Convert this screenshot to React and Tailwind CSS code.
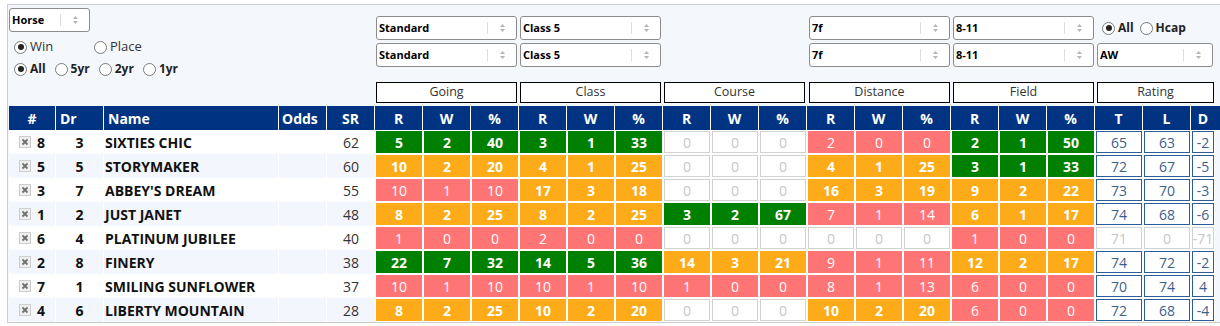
import React from 'react';

const G = 'g', O = 'o', S = 's', W = 'w';

const horses = [
  { no: 8, dr: 3, name: 'SIXTIES CHIC', sr: 62, stats: [[5, 2, 40, G], [3, 1, 33, G], [0, 0, 0, W], [2, 0, 0, S], [2, 1, 50, G]], rating: [65, 63, -2] },
  { no: 5, dr: 5, name: 'STORYMAKER', sr: 60, stats: [[10, 2, 20, O], [4, 1, 25, O], [0, 0, 0, W], [4, 1, 25, O], [3, 1, 33, G]], rating: [72, 67, -5] },
  { no: 3, dr: 7, name: "ABBEY'S DREAM", sr: 55, stats: [[10, 1, 10, S], [17, 3, 18, O], [0, 0, 0, W], [16, 3, 19, O], [9, 2, 22, O]], rating: [73, 70, -3] },
  { no: 1, dr: 2, name: 'JUST JANET', sr: 48, stats: [[8, 2, 25, O], [8, 2, 25, O], [3, 2, 67, G], [7, 1, 14, S], [6, 1, 17, O]], rating: [74, 68, -6] },
  { no: 6, dr: 4, name: 'PLATINUM JUBILEE', sr: 40, stats: [[1, 0, 0, S], [2, 0, 0, S], [0, 0, 0, W], [0, 0, 0, W], [1, 0, 0, S]], rating: [71, 0, -71], dim: true },
  { no: 2, dr: 8, name: 'FINERY', sr: 38, stats: [[22, 7, 32, G], [14, 5, 36, G], [14, 3, 21, O], [9, 1, 11, S], [12, 2, 17, O]], rating: [74, 72, -2] },
  { no: 7, dr: 1, name: 'SMILING SUNFLOWER', sr: 37, stats: [[10, 1, 10, S], [10, 1, 10, S], [1, 0, 0, S], [8, 1, 13, S], [6, 0, 0, S]], rating: [70, 74, 4] },
  { no: 4, dr: 6, name: 'LIBERTY MOUNTAIN', sr: 28, stats: [[8, 2, 25, O], [10, 2, 20, O], [0, 0, 0, W], [10, 2, 20, O], [6, 0, 0, S]], rating: [72, 68, -4] },
];

const cellStyles = {
  g: 'bg-[#008000] text-white font-bold',
  o: 'bg-[#fdab19] text-white font-bold',
  s: 'bg-[#ff7474] text-white',
  w: 'bg-white border border-[#d2d2d2] text-[#c6c6c6]',
};

const cols = 'grid grid-cols-[47px_48px_175px_48px_48px_repeat(15,48px)_48px_48px_24px]';
const groups = ['Going', 'Class', 'Course', 'Distance', 'Field'];

function Arrows() {
  return (
    <svg width="7" height="10" viewBox="0 0 7 10">
      <path d="M3.5 1 L6 4 L1 4 Z" fill="#b5b5b5" />
      <path d="M3.5 9 L6 6 L1 6 Z" fill="#b5b5b5" />
    </svg>
  );
}

function Select({ value, className = '' }) {
  return (
    <div className={`h-6 bg-white border border-[#8c8c8c] rounded-[3px] flex items-center text-[11px] font-bold text-black ${className}`}>
      <span className="flex-1 pl-[2px] truncate">{value}</span>
      <span className="w-px h-[12px] bg-[#dcdcdc]" />
      <span className="w-[28px] flex justify-center">
        <Arrows />
      </span>
    </div>
  );
}

function Radio({ checked, label, bold }) {
  return (
    <span className="flex items-center gap-[3px]">
      <span className="w-[13px] h-[13px] rounded-full border border-[#7a7a7a] bg-white flex items-center justify-center">
        {checked && <span className="w-[6px] h-[6px] rounded-full bg-[#222]" />}
      </span>
      <span className={bold ? 'text-[12px] font-bold text-[#222]' : 'text-[13px] text-[#333]'}>{label}</span>
    </span>
  );
}

function RemoveBox() {
  return (
    <svg width="12" height="12" viewBox="0 0 12 12">
      <rect x="0.5" y="0.5" width="11" height="11" fill="#efefef" stroke="#cdcdcd" />
      <path d="M3.5 3.5 L8.5 8.5 M8.5 3.5 L3.5 8.5" stroke="#6f6f6f" strokeWidth="1.8" />
    </svg>
  );
}

function StatCell({ value, kind }) {
  return (
    <div className="p-px bg-white h-6">
      <div className={`h-full flex items-center justify-center ${cellStyles[kind]}`}>{value}</div>
    </div>
  );
}

function RatingCell({ value, dim }) {
  return (
    <div className="p-px bg-white h-6 overflow-hidden">
      <div className={`h-full flex items-center justify-center bg-white border ${dim ? 'border-[#d2d2d2] text-[#c6c6c6]' : 'border-[#2a5d9a] text-[#3c5f8c]'}`}>
        {value}
      </div>
    </div>
  );
}

export default function App() {
  return (
    <div className="w-[1220px] h-[326px] bg-white overflow-hidden font-['Open_Sans',sans-serif]">
      <div className="ml-[7px] mt-[4px] w-[1230px] h-[319px] border-l border-t border-b border-[#cccccc] bg-[#f4f7fc] pl-px">
        {/* filters */}
        <div className="flex h-[100px]">
          <div className="w-[366px] pt-[3px]">
            <Select value="Horse" className="w-[81px]" />
            <div className="flex mt-[7px] ml-[5px] h-4 items-center">
              <span className="w-[80px]">
                <Radio checked label="Win" />
              </span>
              <Radio label="Place" />
            </div>
            <div className="flex mt-[6px] ml-[5px] h-4 items-center gap-[9px]">
              <Radio checked label="All" bold />
              <Radio label="5yr" bold />
              <Radio label="2yr" bold />
              <Radio label="1yr" bold />
            </div>
          </div>
          <div className="pt-[11px]">
            <div className="grid grid-cols-[repeat(15,48px)_48px_48px_24px] gap-y-[3px]">
              <Select value="Standard" className="col-span-3 ml-px mr-[2px]" />
              <Select value="Class 5" className="col-span-3 ml-px mr-[2px]" />
              <div className="col-span-3" />
              <Select value="7f" className="col-span-3 ml-[2px] mr-px" />
              <Select value="8-11" className="col-span-3 ml-[2px] mr-px" />
              <div className="col-span-3 flex items-center pl-[7px] gap-[6px]">
                <Radio checked label="All" bold />
                <Radio label="Hcap" bold />
              </div>
              <Select value="Standard" className="col-span-3 ml-px mr-[2px]" />
              <Select value="Class 5" className="col-span-3 ml-px mr-[2px]" />
              <div className="col-span-3" />
              <Select value="7f" className="col-span-3 ml-[2px] mr-px" />
              <Select value="8-11" className="col-span-3 ml-[2px] mr-px" />
              <Select value="AW" className="col-span-3 ml-[2px] mr-[2px]" />
            </div>
            <div className="grid grid-cols-[repeat(15,48px)_48px_48px_24px] mt-[15px]">
              {[...groups, 'Rating'].map((g, i) => (
                <div
                  key={g}
                  className={`col-span-3 h-[21px] bg-white border border-black flex items-center justify-center text-[12.5px] text-[#333] ${i >= 3 ? 'ml-[2px] mr-px' : 'ml-px mr-[2px]'}`}
                >
                  {g}
                </div>
              ))}
            </div>
          </div>
        </div>

        {/* header */}
        <div className={`${cols} h-6 mt-px bg-[#003482] text-white font-bold text-[14px]`}>
          <div className="border-r border-white flex items-center justify-center">#</div>
          <div className="border-r border-white flex items-center pl-[4px]">Dr</div>
          <div className="border-r border-white flex items-center pl-[4px]">Name</div>
          <div className="border-r border-white flex items-center pl-[3px]">Odds</div>
          <div className="border-r border-white flex items-center justify-center">SR</div>
          {groups.map(g =>
            ['R', 'W', '%'].map(h => (
              <div key={g + h} className="border-r border-white flex items-center justify-center">{h}</div>
            ))
          )}
          <div className="border-r border-white flex items-center justify-center">T</div>
          <div className="border-r border-white flex items-center justify-center">L</div>
          <div className="flex items-center justify-center">D</div>
        </div>

        {/* rows */}
        {horses.map((h, idx) => {
          const bg = idx % 2 === 0 ? 'bg-white' : 'bg-[#f3f6fc]';
          return (
            <div key={h.name} className={`${cols} h-6 text-[14px]`}>
              <div className={`${bg} border-r border-white flex items-center pl-[10px] gap-[6px] font-bold text-[#111]`}>
                <RemoveBox />
                <span>{h.no}</span>
              </div>
              <div className={`${bg} border-r border-white flex items-center justify-center font-bold text-[#111]`}>{h.dr}</div>
              <div className={`${bg} border-r border-white flex items-center pl-px font-bold text-[#111] whitespace-nowrap`}>{h.name}</div>
              <div className={`${bg} border-r border-white`} />
              <div className={`${bg} flex items-center justify-center text-[#333]`}>{h.sr}</div>
              {h.stats.map((s, gi) =>
                [0, 1, 2].map(k => <StatCell key={`${gi}-${k}`} value={s[k]} kind={s[3]} />)
              )}
              {h.rating.map((r, ri) => (
                <RatingCell key={ri} value={r} dim={h.dim} />
              ))}
            </div>
          );
        })}
      </div>
    </div>
  );
}
